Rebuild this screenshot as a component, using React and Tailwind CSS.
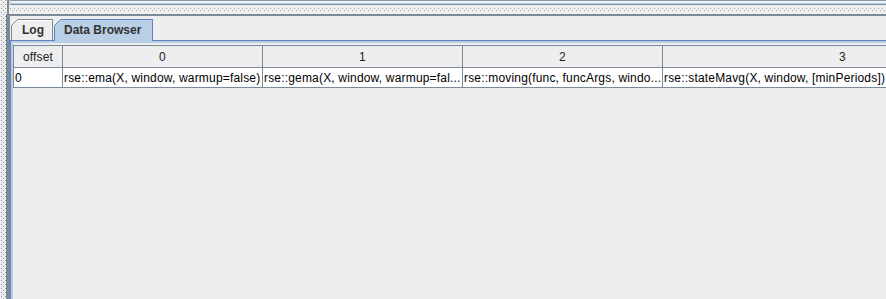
import React from "react";

function Dots({ id, w = "100%", h = "100%", ox = 0, oy = 0 }) {
  return (
    <svg width={w} height={h} className="block">
      <defs>
        <pattern id={id} x={ox} y={oy} width="4" height="4" patternUnits="userSpaceOnUse">
          <rect x="1" y="0" width="1" height="1" fill="#9aa2ab" />
          <rect x="3" y="2" width="1" height="1" fill="#9aa2ab" />
        </pattern>
      </defs>
      <rect width="100%" height="100%" fill={`url(#${id})`} />
    </svg>
  );
}

function Corner({ fill, stroke }) {
  return (
    <svg width="7" height="7" className="absolute -left-px -top-px" viewBox="0 0 7 7">
      <polygon points="0,0 7,0 0,7" fill={fill} />
      <line x1="0.5" y1="6.5" x2="6.5" y2="0.5" stroke={stroke} strokeWidth="1" />
    </svg>
  );
}

const cols = [
  { w: "w-[49px]", h: "offset", v: "0" },
  { w: "w-[200px]", h: "0", v: "rse::ema(X, window, warmup=false)" },
  { w: "w-[200px]", h: "1", v: "rse::gema(X, window, warmup=fal..." },
  { w: "w-[200px]", h: "2", v: "rse::moving(func, funcArgs, windo..." },
  { w: "w-[360px]", h: "3", v: "rse::stateMavg(X, window, [minPeriods])" },
];

export default function App() {
  return (
    <div
      className="flex w-[886px] h-[299px] overflow-hidden bg-[#eeeeee] text-[12px] text-[#222222]"
      style={{ fontFamily: '"Liberation Sans", Arial, sans-serif' }}
    >
      {/* vertical splitter */}
      <div className="w-[6px] h-full shrink-0">
        <Dots id="vdots" />
      </div>

      {/* right side */}
      <div className="flex flex-col flex-1 min-w-0">
        {/* top panel remnant */}
        <div className="h-[5px] shrink-0 flex">
          <div className="w-[1px] bg-[#eeeeee]" />
          <div className="w-[2px] bg-[#7a8a99]" />
          <div className="w-[1px] bg-[#b8cfe5]" />
          <div className="flex-1 flex flex-col">
            <div className="h-[1px] bg-[#8c9aa8]" />
            <div className="h-[2px] bg-[#eeeeee]" />
            <div className="h-[1px] bg-[#b8cfe5]" />
            <div className="h-[1px] bg-[#7a8a99]" />
          </div>
        </div>
        {/* horizontal splitter */}
        <div className="h-[9px] shrink-0 flex">
          <div className="w-[1px]" />
          <div className="w-[2px] bg-[#7a8a99]" />
          <div className="flex-1 flex flex-col justify-center">
            <div className="h-[4px]">
              <Dots id="hdots" ox={0} oy={0} />
            </div>
          </div>
        </div>

        {/* lower panel */}
        <div className="flex-1 min-h-0 border-t-2 border-l-4 border-[#7a8a99] pt-[3px] flex flex-col">
          {/* tabs row */}
          <div className="h-[21px] shrink-0 flex items-end pl-[1px] gap-[1px] relative z-10">
            <div className="relative h-[21px] w-[42px] border-t border-l border-r border-[#7a8a99] bg-[#eeeeee] flex items-center pl-[10px] font-bold text-[#333333]">
              <div className="absolute left-0 top-0 right-0 h-px bg-white" />
              <Corner fill="#eeeeee" stroke="#7a8a99" />
              <span className="relative">Log</span>
            </div>
            <div className="relative h-[22px] -mb-[1px] w-[99px] border-t border-l border-r border-[#6382bf] bg-[#b8cfe5] flex items-center pl-[9px] pb-[1px] font-bold text-[#333333]">
              <Corner fill="#eeeeee" stroke="#6382bf" />
              <span className="relative">Data Browser</span>
            </div>
          </div>

          {/* content */}
          <div className="flex-1 min-h-0 border-t border-l border-[#6382bf] flex flex-col">
            <div className="flex-1 min-h-0 border-t-2 border-l-2 border-[#b8cfe5] pt-[2px] overflow-hidden">
              <div className="w-max border-t border-l border-[#7a8a99] tracking-[0.18px]">
                <div className="flex h-[22px]">
                  {cols.map((c, i) => (
                    <div
                      key={i}
                      className={`${c.w} shrink-0 border-r border-b border-[#7a8a99] bg-[#eeeeee] flex items-center justify-center text-[#222222]`}
                    >
                      {c.h}
                    </div>
                  ))}
                </div>
                <div className="flex h-[20px]">
                  {cols.map((c, i) => (
                    <div
                      key={i}
                      className={`${c.w} shrink-0 border-r border-b border-[#7a8a99] bg-white flex items-center pl-[1px] whitespace-nowrap overflow-hidden text-black`}
                    >
                      {c.v}
                    </div>
                  ))}
                </div>
              </div>
            </div>
          </div>
        </div>
      </div>
    </div>
  );
}
